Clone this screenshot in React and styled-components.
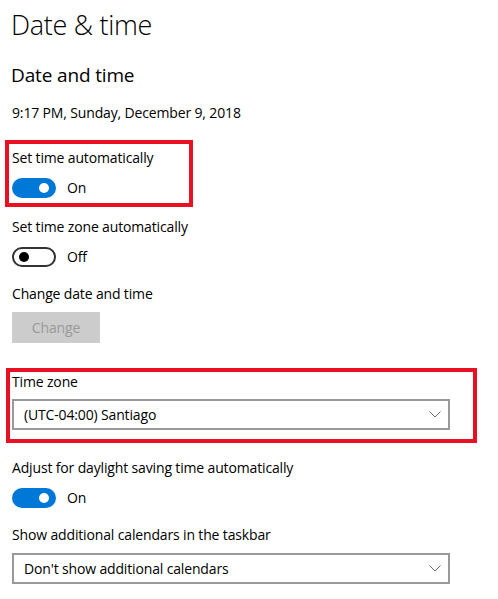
import styled, { createGlobalStyle } from 'styled-components';

const GlobalStyle = createGlobalStyle`
  html, body {
    margin: 0;
    padding: 0;
    background: #ffffff;
  }

  body {
    font-family: 'Open Sans', 'Noto Sans', 'Liberation Sans', sans-serif;
    color: #000000;
    letter-spacing: -0.15px;
  }
`;

function Chevron() {
  return (
    <svg width="12" height="7" viewBox="0 0 12 7" fill="none">
      <path d="M0.5 0.5 L6 6 L11.5 0.5" stroke="#6b6b6b" strokeWidth="1" />
    </svg>
  );
}

function Toggle({ on }) {
  return (
    <ToggleRow>
      <Track $on={on}>
        <Knob $on={on} />
      </Track>
      <State>{on ? 'On' : 'Off'}</State>
    </ToggleRow>
  );
}

function Select({ value }) {
  return (
    <SelectBox>
      <span>{value}</span>
      <Chevron />
    </SelectBox>
  );
}

export default function App() {
  return (
    <>
      <GlobalStyle />
      <Page>
        <Title>Date &amp; time</Title>
        <Subtitle>Date and time</Subtitle>
        <Clock>9:17 PM, Sunday, December 9, 2018</Clock>

        <Highlight $compact>
          <Label>Set time automatically</Label>
          <Toggle on />
        </Highlight>

        <Setting $top={10}>
          <Label>Set time zone automatically</Label>
          <Toggle on={false} />
        </Setting>

        <Setting $top={17}>
          <Label $gap={8}>Change date and time</Label>
          <Button disabled>Change</Button>
        </Setting>

        <Highlight>
          <Label $gap={7}>Time zone</Label>
          <Select value="(UTC-04:00) Santiago" />
        </Highlight>

        <Setting $top={15}>
          <Label>Adjust for daylight saving time automatically</Label>
          <Toggle on />
        </Setting>

        <Setting $top={17}>
          <Label $gap={8}>Show additional calendars in the taskbar</Label>
          <Select value="Don't show additional calendars" />
        </Setting>
      </Page>
    </>
  );
}

const Page = styled.main`
  padding: 8px 0 0 12px;
  width: 498px;
  box-sizing: border-box;
`;

const Title = styled.h1`
  margin: 0 0 0 -1px;
  font-size: 27px;
  line-height: 34px;
  font-weight: 300;
  letter-spacing: -0.3px;
`;

const Subtitle = styled.h2`
  margin: 20px 0 0 -1px;
  font-size: 19px;
  line-height: 26px;
  font-weight: 400;
`;

const Clock = styled.div`
  margin-top: 15px;
  font-size: 14px;
  line-height: 20px;
`;

const Highlight = styled.section`
  box-sizing: border-box;
  border: 4px solid #e81123;
  width: ${(p) => (p.$compact ? '188px' : '471px')};
  margin: ${(p) => (p.$compact ? '17px 0 0 -7px' : '25px 0 0 -6px')};
  padding: ${(p) => (p.$compact ? '4px 0 5px 3px' : '0 0 9px 2px')};
`;

const Setting = styled.section`
  margin-top: ${(p) => p.$top}px;
`;

const Label = styled.div`
  font-size: 14px;
  line-height: 20px;
  margin-bottom: ${(p) => p.$gap ?? 10}px;
`;

const ToggleRow = styled.div`
  display: flex;
  align-items: center;
  gap: 11px;
  height: 20px;
`;

const Track = styled.div`
  box-sizing: border-box;
  width: 44px;
  height: 20px;
  border-radius: 10px;
  display: flex;
  align-items: center;
  padding: 0 5px;
  justify-content: ${(p) => (p.$on ? 'flex-end' : 'flex-start')};
  background: ${(p) => (p.$on ? '#0078d7' : '#ffffff')};
  border: 2px solid ${(p) => (p.$on ? '#0078d7' : '#333333')};
`;

const Knob = styled.div`
  width: 10px;
  height: 10px;
  border-radius: 50%;
  background: ${(p) => (p.$on ? '#ffffff' : '#000000')};
`;

const State = styled.span`
  font-size: 14px;
  line-height: 20px;
`;

const Button = styled.button`
  display: block;
  width: 88px;
  height: 31px;
  border: none;
  margin: 0;
  padding: 0;
  background: #cccccc;
  color: #999999;
  font-family: inherit;
  font-size: 14px;
  letter-spacing: inherit;
`;

const SelectBox = styled.div`
  box-sizing: border-box;
  width: 438px;
  height: 31px;
  border: 2px solid #999999;
  display: flex;
  align-items: center;
  justify-content: space-between;
  padding: 0 7px 0 10px;
  font-size: 14px;
`;
